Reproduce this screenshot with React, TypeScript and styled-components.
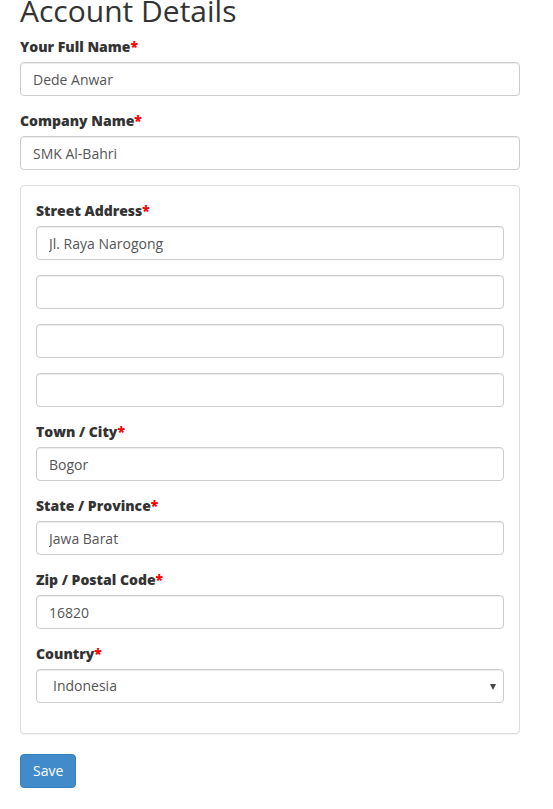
import React from 'react';
import styled, { createGlobalStyle } from 'styled-components';

const GlobalStyle = createGlobalStyle`
  * {
    box-sizing: border-box;
  }

  body {
    margin: 0;
    background: #fff;
    font-family: 'Open Sans', 'Liberation Sans', sans-serif;
    font-size: 14px;
    line-height: 20px;
    color: #333;
  }
`;

interface FieldProps {
  label: string;
  value?: string;
}

const Field = (props: FieldProps) => {
  const { label, value } = props;

  return (
    <FormGroup>
      <Label>
        {label}
        <Required>*</Required>
      </Label>
      <Input type="text" defaultValue={value} />
    </FormGroup>
  );
};

const App = () => {
  const handleSubmit = (e: React.FormEvent) => {
    e.preventDefault();
  };

  return (
    <Wrapper>
      <GlobalStyle />
      <Title>Account Details</Title>
      <form onSubmit={handleSubmit}>
        <Field label="Your Full Name" value="Dede Anwar" />
        <Field label="Company Name" value="SMK Al-Bahri" />

        <Panel>
          <FormGroup>
            <Label>
              Street Address
              <Required>*</Required>
            </Label>
            <Input type="text" defaultValue="Jl. Raya Narogong" />
          </FormGroup>
          <FormGroup>
            <Input type="text" />
          </FormGroup>
          <FormGroup>
            <Input type="text" />
          </FormGroup>
          <FormGroup>
            <Input type="text" />
          </FormGroup>
          <Field label="Town / City" value="Bogor" />
          <Field label="State / Province" value="Jawa Barat" />
          <Field label="Zip / Postal Code" value="16820" />
          <FormGroup>
            <Label>
              Country
              <Required>*</Required>
            </Label>
            <SelectWrap>
              <Select defaultValue="ID">
                <option value="ID">Indonesia</option>
                <option value="MY">Malaysia</option>
                <option value="SG">Singapore</option>
              </Select>
            </SelectWrap>
          </FormGroup>
        </Panel>

        <SaveButton type="submit">Save</SaveButton>
      </form>
    </Wrapper>
  );
};

export default App;

const Wrapper = styled.div`
  width: 540px;
  padding: 0 20px;
`;

const Title = styled.h2`
  margin: -6px 0 10px;
  font-size: 30px;
  font-weight: 400;
  line-height: 33px;
  color: #333;
`;

const FormGroup = styled.div`
  margin-bottom: 15px;
`;

const Label = styled.label`
  display: block;
  margin-bottom: 5px;
  font-weight: 800;
  color: #333;
`;

const Required = styled.span`
  color: #f00;
`;

const Input = styled.input`
  display: block;
  width: 100%;
  height: 34px;
  padding: 6px 12px;
  font-family: inherit;
  font-size: 14px;
  line-height: 20px;
  color: #555;
  background: #fff;
  border: 1px solid #ccc;
  border-radius: 4px;
  box-shadow: inset 0 1px 1px rgba(0, 0, 0, 0.075);
  outline: none;
`;

const Panel = styled.div`
  margin-bottom: 20px;
  padding: 15px;
  border: 1px solid #ddd;
  border-radius: 4px;
  background: #fff;
  box-shadow: 0 1px 1px rgba(0, 0, 0, 0.05);
`;

const SelectWrap = styled.div`
  position: relative;

  &::after {
    content: '';
    position: absolute;
    right: 8px;
    top: 15px;
    border-left: 3px solid transparent;
    border-right: 3px solid transparent;
    border-top: 6px solid #444;
    pointer-events: none;
  }
`;

const Select = styled.select`
  display: block;
  width: 100%;
  height: 34px;
  padding: 6px 16px;
  font-family: inherit;
  font-size: 14px;
  line-height: 20px;
  color: #555;
  background: #fff;
  border: 1px solid #ccc;
  border-radius: 4px;
  box-shadow: inset 0 1px 1px rgba(0, 0, 0, 0.075);
  appearance: none;
  outline: none;
`;

const SaveButton = styled.button`
  display: inline-block;
  height: 34px;
  padding: 6px 12px;
  font-family: inherit;
  font-size: 14px;
  line-height: 20px;
  color: #fff;
  background: #428bca;
  border: 1px solid #357ebd;
  border-radius: 4px;
  cursor: pointer;
`;
